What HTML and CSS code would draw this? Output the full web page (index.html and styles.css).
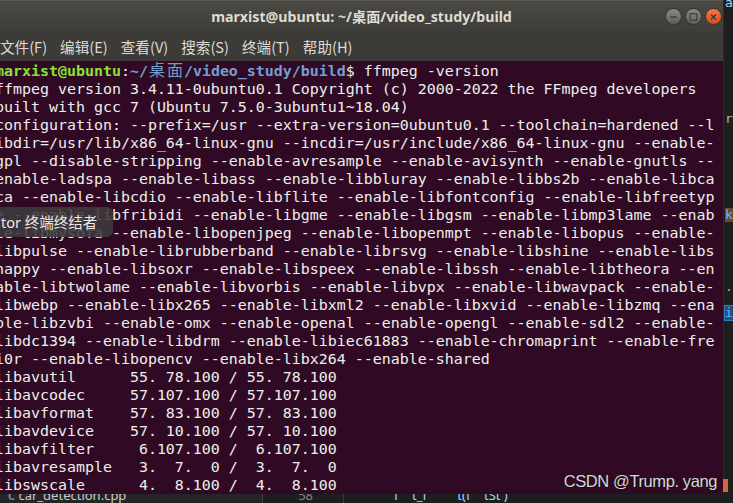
FILE: index.html
```html
<!DOCTYPE html>
<html lang="zh-CN">
<head>
  <meta charset="UTF-8" />
  <title>marxist@ubuntu: ~/桌面/video_study/build</title>
  <link rel="stylesheet" href="styles.css">
</head>
<body>
  <div class="desktop">
    <div class="upper">
      <section class="window">
        <header class="titlebar">
          <span></span>
          <h1 class="title">marxist@ubuntu: ~/桌面/video_study/build</h1>
          <div class="win-buttons">
            <span class="win-btn btn-min"><svg viewBox="0 0 16 16" width="16" height="16"><path d="M4.5 8h7" stroke="#3c3b37" stroke-width="1.4"/></svg></span>
            <span class="win-btn btn-max"><svg viewBox="0 0 16 16" width="16" height="16"><rect x="4.5" y="4.5" width="7" height="7" fill="none" stroke="#3c3b37" stroke-width="1.2"/></svg></span>
            <span class="win-btn btn-close"><svg viewBox="0 0 16 16" width="16" height="16"><path d="M5.3 5.3l5.4 5.4M10.7 5.3l-5.4 5.4" stroke="#3c3b37" stroke-width="1.4"/></svg></span>
          </div>
        </header>

        <nav class="menubar">
          <span>文件(F)</span>
          <span>编辑(E)</span>
          <span>查看(V)</span>
          <span>搜索(S)</span>
          <span>终端(T)</span>
          <span>帮助(H)</span>
        </nav>

        <div class="terminal">
<pre class="output"><span class="p-user">marxist@ubuntu</span>:<span class="p-path">~/<span class="wide">桌</span><span class="wide">面</span>/video_study/build</span>$ ffmpeg -version
ffmpeg version 3.4.11-0ubuntu0.1 Copyright (c) 2000-2022 the FFmpeg developers
built with gcc 7 (Ubuntu 7.5.0-3ubuntu1~18.04)
configuration: --prefix=/usr --extra-version=0ubuntu0.1 --toolchain=hardened --l
ibdir=/usr/lib/x86_64-linux-gnu --incdir=/usr/include/x86_64-linux-gnu --enable-
gpl --disable-stripping --enable-avresample --enable-avisynth --enable-gnutls --
enable-ladspa --enable-libass --enable-libbluray --enable-libbs2b --enable-libca
ca --enable-libcdio --enable-libflite --enable-libfontconfig --enable-libfreetyp
e --enable-libfribidi --enable-libgme --enable-libgsm --enable-libmp3lame --enab
le-libmysofa --enable-libopenjpeg --enable-libopenmpt --enable-libopus --enable-
libpulse --enable-librubberband --enable-librsvg --enable-libshine --enable-libs
nappy --enable-libsoxr --enable-libspeex --enable-libssh --enable-libtheora --en
able-libtwolame --enable-libvorbis --enable-libvpx --enable-libwavpack --enable-
libwebp --enable-libx265 --enable-libxml2 --enable-libxvid --enable-libzmq --ena
ble-libzvbi --enable-omx --enable-openal --enable-opengl --enable-sdl2 --enable-
libdc1394 --enable-libdrm --enable-libiec61883 --enable-chromaprint --enable-fre
i0r --enable-libopencv --enable-libx264 --enable-shared
libavutil      55. 78.100 / 55. 78.100
libavcodec     57.107.100 / 57.107.100
libavformat    57. 83.100 / 57. 83.100
libavdevice    57. 10.100 / 57. 10.100
libavfilter     6.107.100 /  6.107.100
libavresample   3.  7.  0 /  3.  7.  0
libswscale      4.  8.100 /  4.  8.100</pre>
          <div class="tooltip">tor 终端终结者</div>
        </div>
      </section>

      <aside class="side-strip">
        <span class="frag frag-a">a</span>
        <span class="frag frag-r">r</span>
        <span class="frag frag-k">k</span>
        <span class="frag frag-dot">.</span>
        <span class="frag frag-i">i</span>
      </aside>
    </div>

    <div class="editor-strip">
      <div class="explorer"><span class="cpp-icon">C</span> car_detection.cpp</div>
      <div class="code"><span class="line-no">58</span><span class="code-text">f&nbsp;&nbsp;&nbsp;&nbsp;t_f&nbsp;&nbsp;&nbsp;&nbsp;&nbsp;&nbsp;&nbsp;&nbsp;&nbsp;t(f&nbsp;&nbsp;&nbsp;&nbsp;tSt&nbsp;)</span></div>
    </div>

    <div class="watermark">CSDN @Trump. yang</div>
    <div class="scroll-mark"></div>
  </div>
</body>
</html>
```

FILE: styles.css
```css
:root {
  --term-bg: #300a24;
  --term-fg: #eeeeec;
  --prompt-user: #8ae234;
  --prompt-path: #729fcf;
  --chrome-text: #dfdbd2;
  --chrome-bg: #3c3b37;
}

html, body {
  margin: 0;
  padding: 0;
}

body {
  width: 733px;
  height: 503px;
  overflow: hidden;
  background: #1e1e1e;
  font-family: "Noto Sans", "Noto Sans CJK SC", sans-serif;
}

.desktop {
  position: relative;
  display: grid;
  grid-template-rows: 494px 9px;
  width: 733px;
  height: 503px;
}

.upper {
  display: grid;
  grid-template-columns: 723px 10px;
  min-height: 0;
}

.window {
  display: flex;
  flex-direction: column;
  min-height: 0;
  overflow: hidden;
}

/* title bar */
.titlebar {
  display: grid;
  grid-template-columns: 1fr auto 1fr;
  align-items: center;
  height: 32px;
  box-sizing: border-box;
  border-top: 1px solid #5d5b55;
  background: linear-gradient(#4b4944, #3e3d39);
}

.title {
  margin: 0;
  font-size: 14.2px;
  font-weight: 700;
  color: var(--chrome-text);
  white-space: nowrap;
  padding-bottom: 1px;
}

.win-buttons {
  justify-self: end;
  display: flex;
  gap: 3px;
  padding-right: 1px;
}

.win-btn {
  width: 17px;
  height: 17px;
  border-radius: 50%;
  box-sizing: border-box;
  display: flex;
  align-items: center;
  justify-content: center;
  background: linear-gradient(#8c8a85, #5f5e59);
  border: 1px solid #33322f;
}

.btn-close {
  background: linear-gradient(#f47a4a, #d9481c);
}

/* menu bar */
.menubar {
  display: flex;
  gap: 13px;
  align-items: center;
  height: 29px;
  padding-bottom: 1px;
  box-sizing: border-box;
  background: var(--chrome-bg);
  color: var(--chrome-text);
  font-size: 14.6px;
  font-family: "Noto Sans CJK SC", sans-serif;
}

/* terminal */
.terminal {
  position: relative;
  flex: 1;
  background: var(--term-bg);
  overflow: hidden;
}

.output {
  margin: -1px 0 0 -5px;
  font-family: "DejaVu Sans Mono", monospace;
  font-size: 14.95px;
  line-height: 18px;
  color: var(--term-fg);
  white-space: pre;
}

.p-user {
  color: var(--prompt-user);
  font-weight: 700;
}

.p-path {
  color: var(--prompt-path);
  font-weight: 700;
}

.wide {
  display: inline-block;
  width: 18px;
  text-align: center;
  font-family: "Noto Sans CJK SC", sans-serif;
  font-size: 16px;
  font-weight: 400;
}

.tooltip {
  position: absolute;
  left: 0;
  top: 146px;
  width: 113px;
  height: 30px;
  box-sizing: border-box;
  padding-left: 1px;
  border-radius: 0 6px 6px 0;
  background: rgba(62, 58, 60, 0.88);
  color: #e8e8e8;
  font-size: 14.5px;
  line-height: 30px;
  white-space: nowrap;
  font-family: "Noto Sans", "Noto Sans CJK SC", sans-serif;
}

/* neighbouring editor window */
.side-strip {
  background: #1e1e1e;
  border-left: 1px solid #2b2b2b;
  font-family: "DejaVu Sans Mono", monospace;
  font-size: 13px;
  overflow: hidden;
  position: relative;
}

.frag {
  position: absolute;
  left: 1px;
  line-height: 14px;
}

.frag-a { top: -4px; color: #9cdcfe; }
.frag-r { top: 112px; color: #b5b5b5; }
.frag-k { top: 208px; color: #4fc1ff; background: #6b4a2a; }
.frag-dot { top: 280px; color: #d7a64b; }
.frag-i { top: 306px; color: #4fc1ff; background: #264f78; outline: 1px solid #3a7bbf; }

.editor-strip {
  display: grid;
  grid-template-columns: 262px 1fr;
  overflow: hidden;
  font-size: 13px;
  color: #cccccc;
}

.explorer {
  background: #252526;
  padding-left: 8px;
  line-height: 18px;
  margin-top: -8px;
  white-space: nowrap;
}

.cpp-icon {
  color: #519aba;
  font-weight: 700;
  font-size: 11px;
}

.code {
  background: #1e1e1e;
  border-left: 1px solid #404040;
  display: flex;
  line-height: 18px;
  margin-top: -8px;
  white-space: nowrap;
}

.line-no {
  width: 50px;
  text-align: right;
  padding-right: 30px;
  color: #858585;
  border-right: 1px solid #3a3a3a;
}

.code-text {
  padding-left: 50px;
  color: #9cdcfe;
}

.watermark {
  position: absolute;
  right: 16px;
  top: 472px;
  font-family: "Liberation Sans", Arial, sans-serif;
  font-size: 16.5px;
  letter-spacing: -0.4px;
  color: #d6d6d6;
  text-shadow: 1px 1px 1px #111;
}

.scroll-mark {
  position: absolute;
  left: 723px;
  top: 479px;
  width: 5px;
  height: 13px;
  background: #d3663a;
}
```
